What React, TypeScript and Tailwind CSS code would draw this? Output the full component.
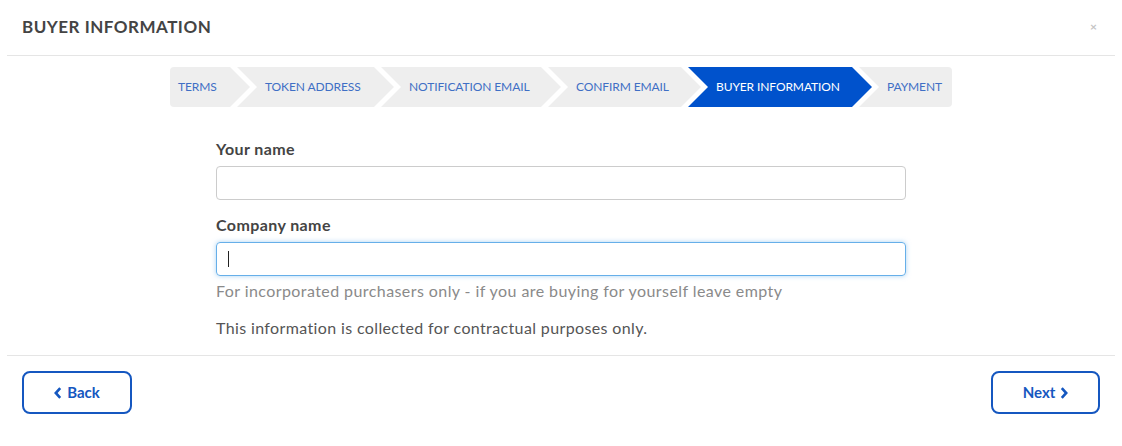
import type { ReactNode } from 'react';

const STEPS = [
  { id: 'terms', label: 'TERMS', width: 'w-[80px]', first: true },
  { id: 'token', label: 'TOKEN ADDRESS', width: 'w-[157px]' },
  { id: 'notify', label: 'NOTIFICATION EMAIL', width: 'w-[180px]' },
  { id: 'confirm', label: 'CONFIRM EMAIL', width: 'w-[153px]' },
  { id: 'buyer', label: 'BUYER INFORMATION', width: 'w-[184px]', active: true },
  { id: 'payment', label: 'PAYMENT', width: 'w-[93px]', last: true },
];

const MIDDLE = 'polygon(0 0, calc(100% - 20px) 0, 100% 50%, calc(100% - 20px) 100%, 0 100%, 20px 50%)';
const FIRST = 'polygon(0 0, calc(100% - 20px) 0, 100% 50%, calc(100% - 20px) 100%, 0 100%)';
const LAST = 'polygon(0 0, 100% 0, 100% 100%, 0 100%, 20px 50%)';

function Chevron({ dir }: { dir: 'left' | 'right' }): ReactNode {
  return (
    <svg viewBox="0 0 8 12" className="h-[12px] w-[8px]" fill="none" stroke="currentColor" strokeWidth={2.6}>
      {dir === 'left' ? <polyline points="6.2,1.2 1.8,6 6.2,10.8" /> : <polyline points="1.8,1.2 6.2,6 1.8,10.8" />}
    </svg>
  );
}

function Stepper(): ReactNode {
  return (
    <div className="mt-[11px] flex h-[40px] justify-center">
      {STEPS.map((s) => (
        <div
          key={s.id}
          className={`flex h-full shrink-0 items-center text-[12px] tracking-[-0.1px] ${s.width} ${
            s.first ? 'rounded-l-[4px] pl-[8px]' : '-ml-[13px] pl-[28px]'
          } ${s.last ? 'rounded-r-[4px]' : ''} ${
            s.active ? 'bg-[#0052cc] text-white' : 'bg-[#eeeeee] text-[#3f6fc5]'
          }`}
          style={{ clipPath: s.first ? FIRST : s.last ? LAST : MIDDLE }}
        >
          <span className="whitespace-nowrap">{s.label}</span>
        </div>
      ))}
    </div>
  );
}

export default function App(): ReactNode {
  return (
    <div className="h-[446px] w-[1122px] bg-white px-[7px] font-['Lato',_'Liberation_Sans',_sans-serif]">
      <div className="flex h-[56px] items-center justify-between border-b border-[#e5e5e5] pl-[15px] pr-[18px]">
        <h1 className="pb-[1px] text-[17px] font-bold tracking-[0.5px] text-[#444]">BUYER INFORMATION</h1>
        <span className="mb-[2px] text-[12px] font-bold text-[#c4c4c4]">×</span>
      </div>

      <Stepper />

      <div className="mx-auto mt-[32px] w-[690px]">
        <label className="block text-[16px] leading-[20px] font-bold tracking-[0.4px] text-[#444]">Your name</label>
        <input
          type="text"
          className="mt-[7px] block h-[34px] w-full rounded-[4px] border border-[#cccccc] px-3 outline-none"
        />

        <label className="mt-[15px] block text-[16px] leading-[20px] font-bold tracking-[0.4px] text-[#444]">
          Company name
        </label>
        <div className="relative mt-[7px]">
          <input
            type="text"
            className="block h-[34px] w-full rounded-[4px] border border-[#66afe9] px-3 shadow-[0_0_5px_rgba(102,175,233,0.55)] outline-none"
          />
          <span className="absolute top-[9px] left-[12px] h-[16px] w-[1px] bg-[#222]" />
        </div>

        <p className="mt-[5px] text-[16px] leading-[20px] tracking-[0.42px] text-[#8a8a8a]">
          For incorporated purchasers only - if you are buying for yourself leave empty
        </p>
        <p className="mt-[17px] text-[16px] leading-[20px] tracking-[0.37px] text-[#555]">
          This information is collected for contractual purposes only.
        </p>
      </div>

      <div className="mt-[17px] flex justify-between border-t border-[#e5e5e5] px-[15px] pt-[15px]">
        <button className="flex h-[43px] w-[110px] items-center justify-center gap-[5px] rounded-[8px] border-2 border-[#1557c0] text-[15px] font-bold text-[#1557c0]">
          <Chevron dir="left" />
          Back
        </button>
        <button className="flex h-[43px] w-[109px] items-center justify-center gap-[5px] rounded-[8px] border-2 border-[#1557c0] text-[15px] font-bold text-[#1557c0]">
          Next
          <Chevron dir="right" />
        </button>
      </div>
    </div>
  );
}
